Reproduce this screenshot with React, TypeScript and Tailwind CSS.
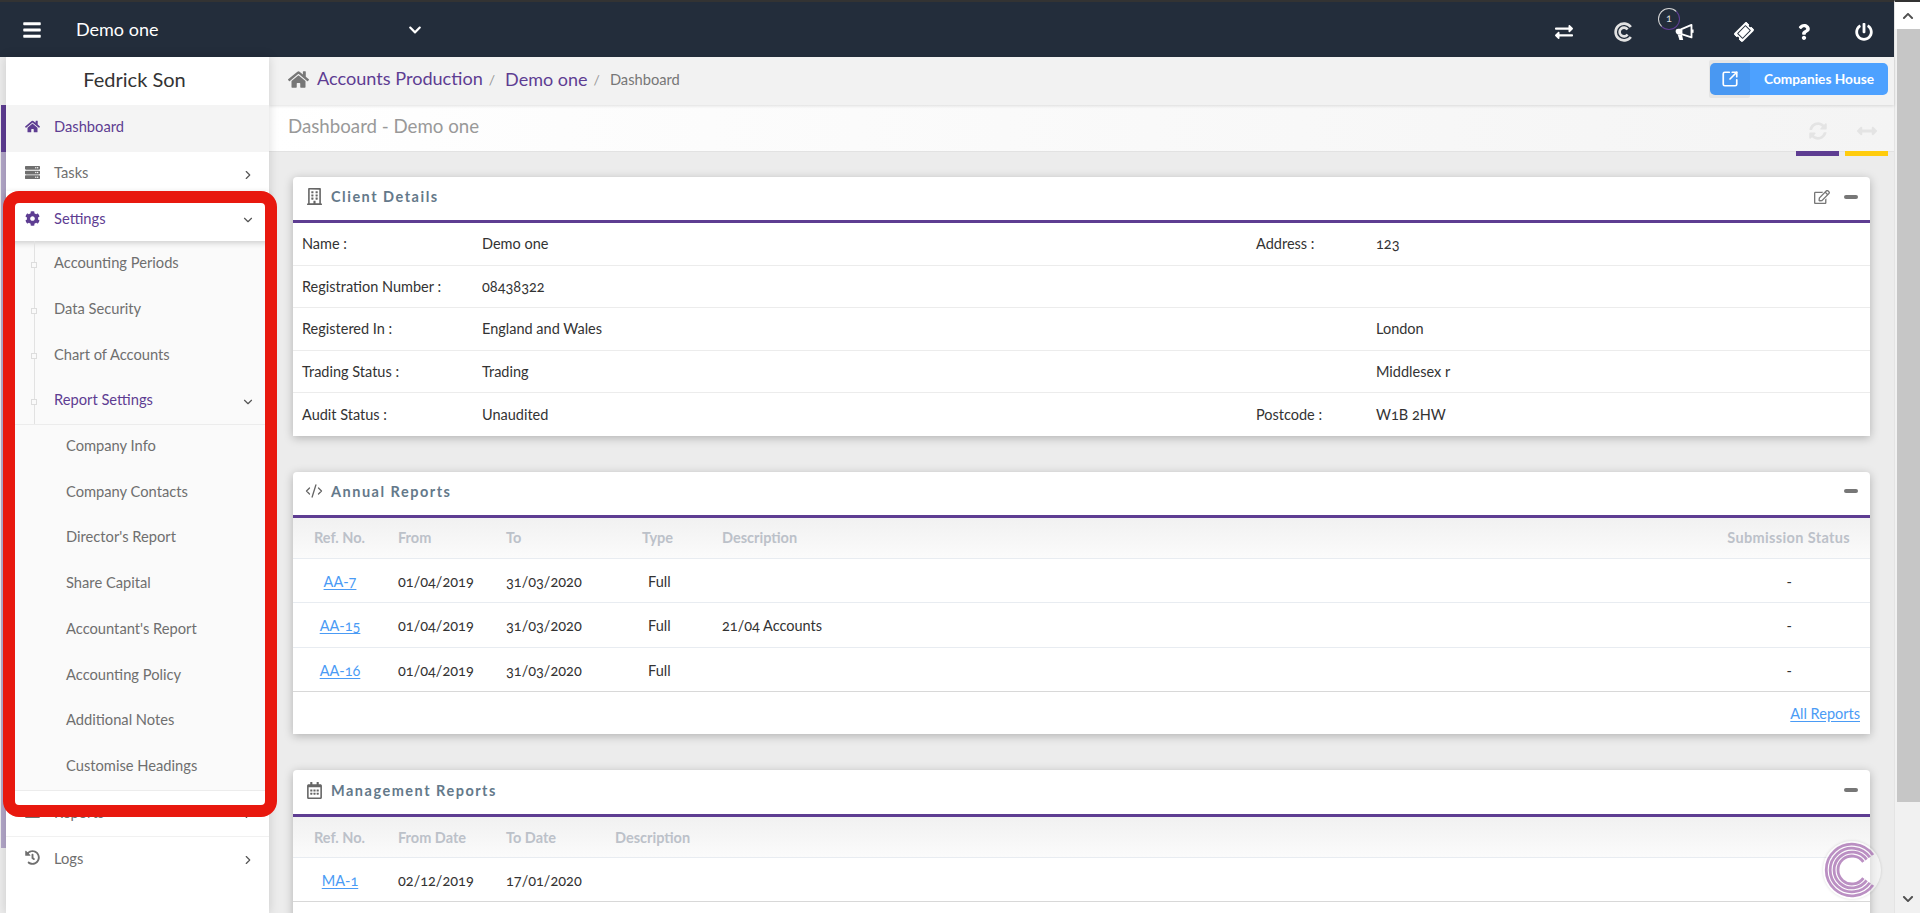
import React from "react";
import {
  FaBars, FaChevronDown, FaExchangeAlt, FaTicketAlt, FaQuestion, FaPowerOff, FaHome,
  FaSyncAlt, FaArrowsAltH, FaRegEdit, FaRegBuilding, FaRegCalendarAlt, FaServer, FaCog, FaHistory,
  FaBriefcase, FaChevronUp,
} from "react-icons/fa";
import { ChevronRight, ChevronDown, CodeXml, SquareArrowOutUpRight } from "lucide-react";

function CLogo({ size, color, opacity = 1, radii, sw }: { size: number; color: string; opacity?: number; radii: number[]; sw: number }) {
  return (
    <svg width={size} height={size} viewBox="0 0 100 100" fill="none" opacity={opacity}>
      {radii.map((r) => {
        const a = 0.62;
        const x = 50 + r * Math.cos(a);
        const y = r * Math.sin(a);
        return <path key={r} d={`M${x} ${50 - y}A${r} ${r} 0 1 0 ${x} ${50 + y}`} stroke={color} strokeWidth={sw} />;
      })}
    </svg>
  );
}

function Megaphone() {
  return (
    <svg width="20" height="20" viewBox="0 0 24 24" fill="none">
      <path d="M9 8.5L21 3.5V18.5L9 14.5Z" stroke="white" strokeWidth="2.2" strokeLinejoin="round" />
      <path d="M2 10.5C2 9 3.5 8 5 8H9V15H5C3.5 15 2 13 2 11.5Z" fill="white" />
      <path d="M4.5 15H9.5L11 21.5H6.5Z" fill="white" />
      <path d="M22.5 9V13" stroke="white" strokeWidth="2" />
    </svg>
  );
}

function SideRow({ icon, label, active, arrow, h, cls = "" }: { icon: React.ReactNode; label: string; active?: boolean; arrow?: boolean; h: string; cls?: string }) {
  return (
    <div className={`${h} ${cls} flex items-center pl-[16px] pr-[14px] ${active ? "bg-[#f4f4f4] text-[#5e3d92]" : "text-[#6f6f6f]"}`}>
      <span className="w-[20px] flex justify-center text-[15px]">{icon}</span>
      <span className="ml-[12px] flex-1 text-[14.7px]">{label}</span>
      {arrow && <ChevronRight size={14} strokeWidth={2} className="text-[#555] mt-[5px]" />}
    </div>
  );
}

function TreeRow({ label, purple }: { label: string; purple?: boolean }) {
  return (
    <div className={`h-[45.7px] flex items-center pl-[48px] pr-[14px] pb-[3px] relative text-[14.7px] ${purple ? "text-[#5e3d92]" : "text-[#6f6f6f]"}`}>
      <span className="absolute left-[25px] top-[21px] w-[6px] h-[6px] border border-[#dddddd] bg-[#fafafa]" />
      <span className="flex-1">{label}</span>
      {purple && <ChevronDown size={14} strokeWidth={2} className="text-[#555] mt-[5px]" />}
    </div>
  );
}

function SubRow({ label }: { label: string }) {
  return <div className="h-[45.7px] flex items-center pl-[60px] pb-[5px] text-[14.7px] text-[#6f6f6f]">{label}</div>;
}

function Sidebar() {
  return (
    <aside className="w-[269px] shrink-0 flex">
      <div className="w-[6px] shrink-0 bg-[#ececec] pl-px">
        <div className="h-[47px] mt-[48px] bg-[#5e3d92]" />
        <div className="h-[696px] bg-[#b2a6c8]" />
      </div>
      <div className="flex-1 bg-white shadow-[0_0_10px_rgba(0,0,0,0.15)] z-10">
        <div className="h-[48px] flex items-center justify-center pb-[5px] pr-[6px] text-[20px] text-[#333]">Fedrick Son</div>
        <SideRow icon={<FaHome />} label="Dashboard" active h="h-[47px]" cls="pb-[5px]" />
        <SideRow icon={<FaServer />} label="Tasks" arrow h="h-[39px]" cls="pt-[2px]" />
        <div className="h-[50px] flex items-center pl-[16px] pr-[14px] pt-[4px] text-[#5e3d92] shadow-[0_2px_6px_rgba(0,0,0,0.18)] relative">
          <span className="w-[20px] flex justify-center text-[15px]"><FaCog /></span>
          <span className="ml-[12px] flex-1 text-[14.7px]">Settings</span>
          <ChevronDown size={14} strokeWidth={2} className="text-[#555] mt-[4px]" />
        </div>
        <div className="bg-[#fafafa] border-b border-[#ececec]">
          <div className="relative border-b border-[#ececec]">
            <span className="absolute left-[28px] top-0 bottom-0 w-px bg-[#e2e2e2]" />
            <TreeRow label="Accounting Periods" />
            <TreeRow label="Data Security" />
            <TreeRow label="Chart of Accounts" />
            <TreeRow label="Report Settings" purple />
          </div>
          <SubRow label="Company Info" />
          <SubRow label="Company Contacts" />
          <SubRow label="Director's Report" />
          <SubRow label="Share Capital" />
          <SubRow label="Accountant's Report" />
          <SubRow label="Accounting Policy" />
          <SubRow label="Additional Notes" />
          <SubRow label="Customise Headings" />
        </div>
        <SideRow icon={<FaBriefcase />} label="Reports" arrow h="h-[46px]" cls="pb-[4px] border-b border-[#f1f1f1]" />
        <SideRow icon={<FaHistory />} label="Logs" arrow h="h-[46px]" cls="pb-[5px]" />
      </div>
    </aside>
  );
}

function Card({ icon, title, edit, tall, children }: { icon: React.ReactNode; title: string; edit?: boolean; tall?: boolean; children: React.ReactNode }) {
  return (
    <section className="bg-white rounded-t-[4px] shadow-[0_2px_10px_rgba(0,0,0,0.25)]">
      <header className={`${tall ? "h-[47px]" : "h-[46px]"} flex items-center px-[12px] pb-[4px] border-b-[3px] border-[#5e3d92]`}>
        <span className="w-[18px] flex justify-center text-[17px] text-[#666]">{icon}</span>
        <span className="ml-[8px] flex-1 text-[14.5px] font-bold tracking-[1.5px] text-[#64798a]">{title}</span>
        {edit && <FaRegEdit className="text-[16px] text-[#777] mr-[14px]" />}
        <span className="w-[14px] h-[4px] rounded-[2px] bg-[#777]" />
      </header>
      {children}
    </section>
  );
}

function DetailRow({ a, b, c, d, last }: { a: string; b: string; c?: string; d?: string; last?: boolean }) {
  return (
    <div className={`h-[42.6px] flex items-center pl-[9px] text-[14.5px] text-[#333] ${last ? "" : "border-b border-[#ececec]"}`}>
      <span className="w-[180px]">{a}</span>
      <span className="w-[774px]">{b}</span>
      <span className="w-[120px]">{c}</span>
      <span>{d}</span>
    </div>
  );
}

function Head({ cols }: { cols: React.ReactNode }) {
  return <div className="h-[41px] flex items-center pl-[21px] pr-[20px] text-[14.5px] font-bold text-[#bcc1c9] bg-gradient-to-b from-[#f1f1f1] to-[#fbfbfb] border-b border-[#e8ecf1]">{cols}</div>;
}

function Link({ children }: { children: React.ReactNode }) {
  return <span className="text-[#4a9bf5] underline underline-offset-2">{children}</span>;
}

function AnnualRow({ r, desc, line }: { r: string; desc?: string; line: string }) {
  return (
    <div className={`h-[44.5px] flex items-center pl-[21px] pr-[20px] pt-[2px] text-[14.5px] text-[#333] border-b ${line}`}>
      <span className="w-[52px] text-center"><Link>{r}</Link></span>
      <span className="w-[108px] ml-[32px]">01/04/2019</span>
      <span className="w-[136px]">31/03/2020</span>
      <span className="w-[80px] pl-[6px]">Full</span>
      <span className="flex-1">{desc}</span>
      <span className="w-[100px] pr-[58px] text-right">-</span>
    </div>
  );
}

export default function App() {
  return (
    <div className="h-[913px] overflow-hidden flex bg-[#ececec] oldstyle-nums font-['Lato','Noto_Sans',sans-serif] relative">
      <div className="flex-1 min-w-0 flex flex-col">
        <header className="h-[57px] shrink-0 flex items-center bg-[#232d3b] border-t-2 border-[#333] text-white">
          <FaBars className="ml-[22px] text-[20px]" />
          <span className="ml-[34px] w-[332px] text-[18px]">Demo one</span>
          <FaChevronDown className="text-[14px]" />
          <div className="flex-1" />
          <div className="flex items-center text-[18px] pt-[4px]">
            <span className="w-[60px] flex justify-center"><FaExchangeAlt /></span>
            <span className="w-[60px] flex justify-center"><CLogo size={20} color="#e2e2e2" radii={[42, 22]} sw={13} /></span>
            <span className="w-[60px] flex justify-center relative">
              <Megaphone />
              <span className="absolute left-[4px] -top-[14px] w-[22px] h-[22px] rounded-full border border-[#d5d5d5] border-r-[#5e3d92] border-b-[#5e3d92] flex items-center justify-center text-[11px] text-[#ddd]">1</span>
            </span>
            <span className="w-[60px] flex justify-center"><FaTicketAlt className="-rotate-45" /></span>
            <span className="w-[60px] flex justify-center text-[16px]"><FaQuestion /></span>
            <span className="w-[60px] flex justify-center"><FaPowerOff /></span>
          </div>
        </header>

        <div className="flex-1 min-h-0 flex">
          <Sidebar />
          <main className="flex-1 min-w-0 flex flex-col">
            <div className="h-[48px] shrink-0 flex items-center pl-[19px] pr-[6px] pb-[4px] bg-[#f2f2f2] shadow-[0_1px_3px_rgba(0,0,0,0.12)] z-[1]">
              <FaHome className="text-[21px] text-[#777]" />
              <span className="ml-[8px] text-[18.1px] text-[#5e3d92]">Accounts Production</span>
              <span className="ml-[6px] text-[14px] text-[#999]">/</span>
              <span className="ml-[10px] text-[18px] text-[#5e3d92]">Demo one</span>
              <span className="ml-[6px] text-[14px] text-[#999]">/</span>
              <span className="ml-[10px] text-[14.7px] text-[#777]">Dashboard</span>
              <div className="flex-1" />
              <div className="w-[178px] h-[32px] relative flex items-center rounded-[5px] bg-[#4da1ff] text-white text-[13.7px] font-bold">
                <span className="absolute -left-px -top-[3px] w-[41px] h-[38px] flex items-center justify-center bg-black/5 rounded-[2px]"><SquareArrowOutUpRight size={18} strokeWidth={2.25} /></span>
                <span className="flex-1 text-center pl-[40px]">Companies House</span>
              </div>
            </div>
            <div className="h-[47px] shrink-0 flex items-center pl-[19px] pr-[6px] bg-gradient-to-r from-white to-[#f4f4f4] border-b border-[#e2e2e2] relative">
              <span className="flex-1 text-[18.7px] text-[#999] pb-[4px]">Dashboard - Demo one</span>
              <div className="flex gap-[6px] self-stretch">
                <div className="w-[43px] flex justify-center items-center pt-[6px] relative text-[18px] text-[#e4e4e4]">
                  <FaSyncAlt />
                  <span className="absolute left-0 right-0 -bottom-[5px] h-[5px] bg-[#5e3d92]" />
                </div>
                <div className="w-[43px] flex justify-center items-center pt-[6px] relative text-[20px] text-[#e4e4e4]">
                  <FaArrowsAltH />
                  <span className="absolute left-0 right-0 -bottom-[5px] h-[5px] bg-[#ffcc0d]" />
                </div>
              </div>
            </div>
            <div className="flex-1 min-h-0 overflow-hidden px-[24px] pt-[25px] flex flex-col gap-[36px]">
              <Card icon={<FaRegBuilding />} title="Client Details" edit>
                <DetailRow a="Name :" b="Demo one" c="Address :" d="123" />
                <DetailRow a="Registration Number :" b="08438322" />
                <DetailRow a="Registered In :" b="England and Wales" d="London" />
                <DetailRow a="Trading Status :" b="Trading" d="Middlesex r" />
                <DetailRow a="Audit Status :" b="Unaudited" c="Postcode :" d="W1B 2HW" last />
              </Card>
              <Card icon={<CodeXml size={18} strokeWidth={1.75} />} title="Annual Reports">
                <Head cols={<>
                  <span className="w-[84px]">Ref. No.</span>
                  <span className="w-[108px]">From</span>
                  <span className="w-[136px]">To</span>
                  <span className="w-[80px]">Type</span>
                  <span className="flex-1">Description</span>
                  <span className="tracking-[0.35px]">Submission Status</span>
                </>} />
                <AnnualRow r="AA-7" line="border-[#e8ecf1]" />
                <AnnualRow r="AA-15" desc="21/04 Accounts" line="border-[#e8ecf1]" />
                <AnnualRow r="AA-16" line="border-[#d8d8d8]" />
                <div className="h-[42px] flex items-center justify-end pr-[10px] text-[14.5px]"><Link>All Reports</Link></div>
              </Card>
              <Card icon={<FaRegCalendarAlt />} title="Management Reports" tall>
                <Head cols={<>
                  <span className="w-[84px]">Ref. No.</span>
                  <span className="w-[108px]">From Date</span>
                  <span className="w-[109px]">To Date</span>
                  <span>Description</span>
                </>} />
                <div className="h-[44px] flex items-center pl-[21px] pt-[2px] text-[14.5px] text-[#333] border-b border-[#d8d8d8]">
                  <span className="w-[52px] text-center"><Link>MA-1</Link></span>
                  <span className="w-[108px] ml-[32px]">02/12/2019</span>
                  <span>17/01/2020</span>
                </div>
                <div className="h-[60px]" />
              </Card>
            </div>
          </main>
        </div>
      </div>

      <div className="w-[26px] shrink-0 bg-[#f1f1f1] border-l border-[#e4e4e4] border-t-2 border-t-[#333] flex flex-col">
        <div className="h-[27px] shrink-0 flex items-center justify-center bg-white text-[12px] text-[#505050]"><FaChevronUp /></div>
        <div className="h-[773px] shrink-0 ml-[2px] bg-[#c6c6c6]" />
        <div className="flex-1" />
        <div className="h-[28px] shrink-0 flex items-center justify-center text-[12px] text-[#505050]"><FaChevronDown /></div>
      </div>

      {/* Annotation drawn over the settings menu */}
      <div className="absolute left-[3px] top-[191px] w-[274px] h-[626px] border-[12px] border-[#e8180e] rounded-[16px] z-30 pointer-events-none" />
      {/* Floating logo button */}
      <div className="absolute left-[1823px] top-[841px] w-[58px] h-[58px] rounded-full bg-white/40 shadow-[0_0_3px_rgba(0,0,0,0.15)] flex items-center justify-center z-30">
        <CLogo size={56} color="#a56bb0" opacity={0.75} radii={[46, 39, 32, 25]} sw={5} />
      </div>
    </div>
  );
}
